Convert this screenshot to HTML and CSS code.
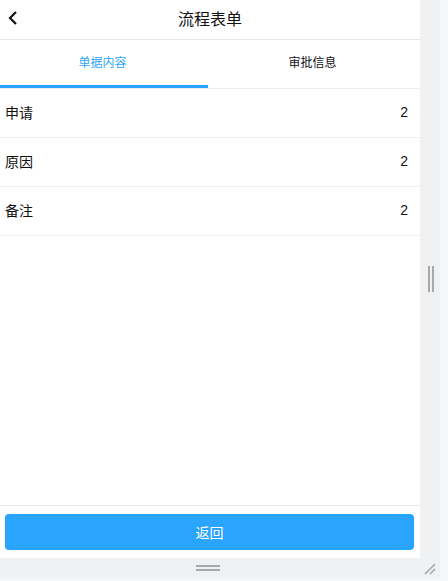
FILE: index.html
```html
<!DOCTYPE html>
<html lang="zh-CN">
<head>
    <meta charset="UTF-8">
    <meta name="viewport" content="width=device-width, initial-scale=1.0">
    <title>流程表单</title>
    <link rel="stylesheet" href="styles.css">
</head>
<body>
    <div class="frame">
        <div class="app">
            <div class="navbar">
                <span class="back">
                    <svg width="12" height="16" viewBox="0 0 12 16">
                        <path d="M10 2 L4 8 L10 14" fill="none" stroke="#111" stroke-width="2.2"/>
                    </svg>
                </span>
                <span class="title">流程表单</span>
            </div>

            <div class="tabs">
                <div class="tab active">单据内容</div>
                <div class="tab">审批信息</div>
            </div>

            <div class="list">
                <div class="row"><span>申请</span><span class="val">2</span></div>
                <div class="row"><span>原因</span><span class="val">2</span></div>
                <div class="row"><span>备注</span><span class="val">2</span></div>
            </div>

            <div class="footer">
                <button class="btn-back">返回</button>
            </div>
        </div>

        <div class="gutter-v"><i></i><i></i></div>
        <div class="edge"></div>

        <div class="gutter-h"><i></i><i></i></div>
        <div class="corner">
            <svg width="20" height="20" viewBox="0 0 20 20">
                <path d="M5 16 L15 6 M10 16 L15 11" stroke="#a8a8a8" stroke-width="1.6"/>
            </svg>
        </div>
        <div class="edge"></div>
    </div>
</body>
</html>
```

FILE: styles.css
```css
* {
    box-sizing: border-box;
}
body {
    margin: 0;
    font-family: "Liberation Sans", "Noto Sans CJK SC", sans-serif;
    color: #111;
    background: #f5f6f7;
}
.frame {
    display: grid;
    grid-template-columns: 420px 20px 8px;
    grid-template-rows: 558px 20px 3px;
}
.app {
    display: flex;
    flex-direction: column;
    background: #fff;
}
.navbar {
    position: relative;
    height: 40px;
    display: flex;
    align-items: center;
    justify-content: center;
    padding-bottom: 3px;
    border-bottom: 1px solid #e6e6e6;
}
.back {
    position: absolute;
    left: 6px;
    top: 10px;
    display: flex;
}
.title {
    font-size: 16px;
}
.tabs {
    display: flex;
    height: 49px;
    border-bottom: 1px solid #ececec;
}
.tab {
    position: relative;
    flex: 1;
    display: flex;
    align-items: center;
    justify-content: center;
    font-size: 12px;
    padding: 0 5px 6px 0;
}
.tab.active {
    color: #2ea6f8;
}
.tab.active::after {
    content: "";
    position: absolute;
    left: 0;
    bottom: 0;
    width: 208px;
    height: 3px;
    background: #29a5ff;
}
.list {
    flex: 1;
}
.row {
    display: flex;
    justify-content: space-between;
    align-items: center;
    height: 49px;
    padding: 0 12px 3px 5px;
    border-bottom: 1px solid #f1f1f1;
    font-size: 14px;
}
.footer {
    border-top: 1px solid #e8e8e8;
    padding: 8px 6px 8px 5px;
}
.btn-back {
    display: block;
    width: 100%;
    height: 36px;
    border: none;
    border-radius: 4px;
    background: #29a5ff;
    color: #fff;
    font-family: inherit;
    font-size: 14px;
    padding-top: 1px;
}
.gutter-v {
    background: #f0f1f3;
    display: flex;
    align-items: center;
    justify-content: center;
    gap: 2px;
    padding-left: 1px;
}
.gutter-v i {
    width: 2px;
    height: 26px;
    background: #a8a8a8;
}
.gutter-h {
    background: #f0f1f3;
    display: flex;
    flex-direction: column;
    align-items: center;
    justify-content: center;
    gap: 2px;
    padding-right: 4px;
}
.gutter-h i {
    width: 24px;
    height: 2px;
    background: #a8a8a8;
}
.corner {
    background: #f0f1f3;
    display: flex;
}
.edge {
    background: #f5f6f7;
}
```
